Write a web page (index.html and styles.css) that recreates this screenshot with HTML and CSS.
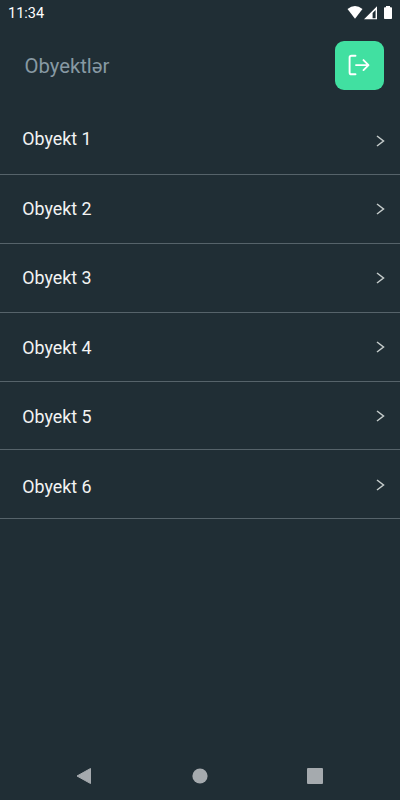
FILE: index.html
```html
<!DOCTYPE html>
<html lang="az">
<head>
<meta charset="utf-8">
<title>Obyektlər</title>
<link rel="stylesheet" href="styles.css">
</head>
<body>
<div class="status">
  <span class="clock">11:34</span>
  <svg class="indicators" width="48" height="16" viewBox="0 0 48 16">
    <path fill="#fff" d="M-.5 3Q7-2.800 14.500 3L7 12.700Z"/>
    <path fill="#fff" fill-rule="evenodd" d="M29 .2V13.200H16ZM27.600 4L24.600 7V12.200H27.600Z"/>
    <path fill="#fff" d="M38 0h4v1.200h1.200q.8 0 .8.8v10.200q0 .8-.8.8h-6.400q-.8 0-.8-.8V2q0-.8.8-.8H38Z"/>
  </svg>
</div>
<header class="header">
  <h1 class="title">Obyektlər</h1>
  <button class="logout" aria-label="Çıxış">
    <svg width="22" height="22" viewBox="0 0 22 22" fill="none" stroke="#fff" stroke-width="1.9" stroke-linecap="round" stroke-linejoin="round">
      <path d="M7.500 1.700H3.500Q1.600 1.700 1.600 3.600V18.400Q1.600 20.300 3.500 20.300H7.500M8 11.100H20.300M15.500 6.100L20.500 11.100L15.500 16.100"/>
    </svg>
  </button>
</header>
<ul class="list">
  <li class="row"><span class="label">Obyekt 1</span><svg class="chevron" viewBox="0 0 9 12"><path d="M1 1L7.500 6L1 11"/></svg></li>
  <li class="row"><span class="label">Obyekt 2</span><svg class="chevron" viewBox="0 0 9 12"><path d="M1 1L7.500 6L1 11"/></svg></li>
  <li class="row"><span class="label">Obyekt 3</span><svg class="chevron" viewBox="0 0 9 12"><path d="M1 1L7.500 6L1 11"/></svg></li>
  <li class="row"><span class="label">Obyekt 4</span><svg class="chevron" viewBox="0 0 9 12"><path d="M1 1L7.500 6L1 11"/></svg></li>
  <li class="row"><span class="label">Obyekt 5</span><svg class="chevron" viewBox="0 0 9 12"><path d="M1 1L7.500 6L1 11"/></svg></li>
  <li class="row"><span class="label">Obyekt 6</span><svg class="chevron" viewBox="0 0 9 12"><path d="M1 1L7.500 6L1 11"/></svg></li>
</ul>
<nav class="navbar">
  <svg width="16" height="18" viewBox="0 0 16 18"><path d="M14.500 1.500V16.500L1 9Z" fill="#a5aaae" stroke="#a5aaae" stroke-linejoin="round"/></svg>
  <svg width="16" height="16" viewBox="0 0 16 16"><circle cx="8" cy="8" r="7.600" fill="#a5aaae"/></svg>
  <span class="recent"></span>
</nav>
</body>
</html>
```
FILE: styles.css
```css
* { box-sizing: border-box; }
body {
  margin: 0;
  height: 800px;
  display: flex;
  flex-direction: column;
  background: #202e35;
  color: #f2f3f3;
  font-family: Roboto, "Liberation Sans", sans-serif;
  overflow: hidden;
}
.status {
  height: 26px;
  display: flex;
  justify-content: space-between;
  align-items: flex-start;
  padding: 0 4px 0 8px;
}
.clock { margin-top: 1px; font-size: 14.5px; line-height: 26px; color: #fff; }
.indicators { margin: 6px 0 0; overflow: visible; }
.header {
  height: 80px;
  display: flex;
  justify-content: space-between;
  align-items: flex-start;
  padding: 14.500px 16px 0 24.500px;
}
.title {
  margin: 13px 0 0;
  font-size: 20.3px;
  line-height: 24px;
  font-weight: 400;
  color: #8799a3;
}
.logout {
  width: 49.300px;
  height: 49.300px;
  padding: 0;
  display: flex;
  align-items: center;
  justify-content: center;
  border: 0;
  border-radius: 9px;
  background: #41e0a1;
}
.list { list-style: none; margin: 0; padding: 0; }
.row {
  height: 68.9px;
  display: flex;
  justify-content: space-between;
  align-items: flex-start;
  padding: 0 15.300px 0 22.300px;
  border-bottom: 1px solid #56636a;
}
.label { font-size: 17.850px; line-height: 24px; margin-top: 21px; }
.row:nth-child(2) .label { margin-top: 21.700px; }
.row:nth-child(3) .label { margin-top: 22.400px; }
.row:nth-child(4) .label { margin-top: 23.100px; }
.row:nth-child(5) .label { margin-top: 23.800px; }
.row:nth-child(6) .label { margin-top: 24.400px; }
.chevron {
  width: 9px;
  height: 12px;
  margin-top: 28.500px;
  fill: none;
  stroke: #c5cccb;
  stroke-width: 1.5;
}
.navbar {
  height: 50px;
  margin-top: auto;
  display: flex;
  justify-content: space-between;
  align-items: center;
  padding: 1px 77px 0 76px;
}
.recent { width: 16px; height: 16px; border-radius: 1px; background: #a5aaae; }
```
